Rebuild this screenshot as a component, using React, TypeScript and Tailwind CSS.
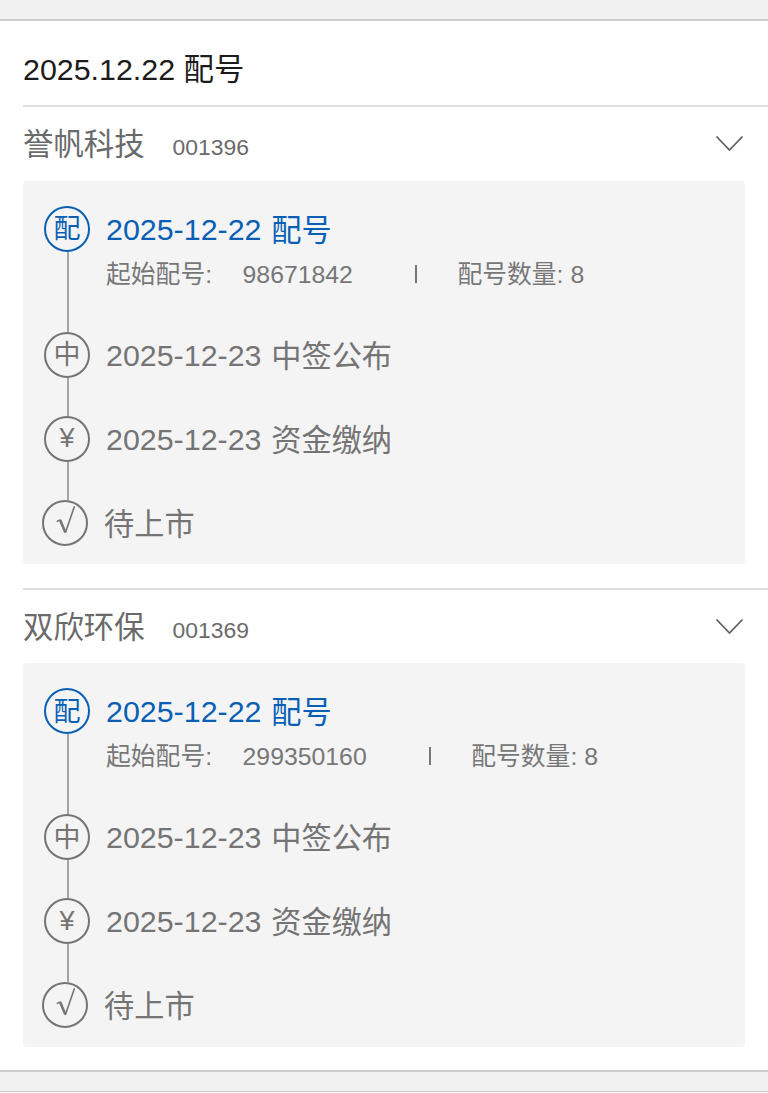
import React from 'react';
import clsx from 'clsx';

interface Lottery {
    name: string;
    code: string;
    startNo: string;
    count: number;
}

interface StepProps {
    badge: React.ReactNode;
    date?: string;
    label: string;
    active?: boolean;
    last?: boolean;
    children?: React.ReactNode;
}

const lotteries: Lottery[] = [
    { name: '誉帆科技', code: '001396', startNo: '98671842', count: 8 },
    { name: '双欣环保', code: '001369', startNo: '299350160', count: 8 },
];

const CheckMark = () => (
    <svg className="size-[42px]" viewBox="2 2 42 42" fill="none" stroke="currentColor">
        <path d="M14.7 21.6 18 19.8" strokeWidth="1.5" />
        <path d="M18 19.8 23.3 32.2" strokeWidth="2.6" />
        <path d="M23.3 33 32.5 6.2" strokeWidth="1.6" />
    </svg>
);

const Step: React.FC<StepProps> = ({ badge, date, label, active = false, last = false, children }) => (
    <div className={clsx('flex', active ? 'h-[126px] text-[#0a5fb4]' : 'text-[#747474]', !active && (last ? '-ml-0.5 h-[46px]' : 'h-[84px]'))}>
        <div className="flex w-[46px] shrink-0 flex-col items-center">
            <div className="flex size-[46px] shrink-0 items-center justify-center rounded-full border-2 border-current text-[27px] leading-none">
                {badge}
            </div>
            {!last && <div className="ml-px w-0.5 flex-1 bg-[#a3a3a3]" />}
        </div>
        <div className="ml-4 whitespace-nowrap">
            <div className="flex h-[46px] items-center text-[30.4px] leading-[46px]">
                {date && <span className="mr-[9.8px]">{date}</span>}
                <span className="pt-1 text-[30.2px]">{label}</span>
            </div>
            {children}
        </div>
    </div>
);

const LotteryCard: React.FC<{ item: Lottery }> = ({ item }) => (
    <section className="ml-[23px] border-t-2 border-[#dddddd]">
        <div className="flex h-[73.6px] items-center pr-6 pt-[0.8px] text-[#6a6a6a]">
            <h2 className="text-[30.4px] leading-[46px]">{item.name}</h2>
            <span className="ml-7 mt-[7px] text-[22.9px] leading-none">{item.code}</span>
            <svg className="mb-px ml-auto" width="29" height="17" viewBox="0 0 29 17" fill="none" stroke="#5f5f5f" strokeWidth="1.8">
                <path d="M1.5 1.5 14.5 15 27.5 1.5" />
            </svg>
        </div>
        <div className="mr-[23px] h-[383.2px] rounded bg-[#f4f4f4] pl-[21px] pt-[25px]">
            <Step badge={<span className="pt-0.5">配</span>} date="2025-12-22" label="配号" active>
                <div className="flex h-[45px] items-center pt-px text-[24.8px] leading-[44px] text-[#777777]">
                    <span>起始配号:</span>
                    <span className="ml-[30.5px]">{item.startNo}</span>
                    <span className="-mt-0.5 ml-[62.5px] h-[18px] w-[2px] bg-[#777777]" />
                    <span className="ml-10">配号数量: {item.count}</span>
                </div>
            </Step>
            <Step badge={<span className="pt-0.5">中</span>} date="2025-12-23" label="中签公布" />
            <Step badge={<span className="text-[27px]">¥</span>} date="2025-12-23" label="资金缴纳" />
            <Step badge={<CheckMark />} label="待上市" last />
        </div>
    </section>
);

export default function App() {
    return (
        <div className="min-h-[1093px] bg-white font-['Liberation_Sans','Noto_Sans_CJK_SC',sans-serif]">
            <div className="h-[21px] border-b-2 border-[#cccccc] bg-[#f1f1f1]" />
            <h1 className="flex h-[84px] items-center pl-[23px] pt-3 text-[30.4px] leading-[46px] text-[#1c1c1c]">
                2025.12.22 配号
            </h1>
            <div className="flex flex-col gap-6">
                {lotteries.map((item) => (
                    <LotteryCard key={item.code} item={item} />
                ))}
            </div>
            <div className="mt-[23.4px] h-[22px] border-b border-t-2 border-[#cccccc] bg-[#f1f1f1]" />
        </div>
    );
}
